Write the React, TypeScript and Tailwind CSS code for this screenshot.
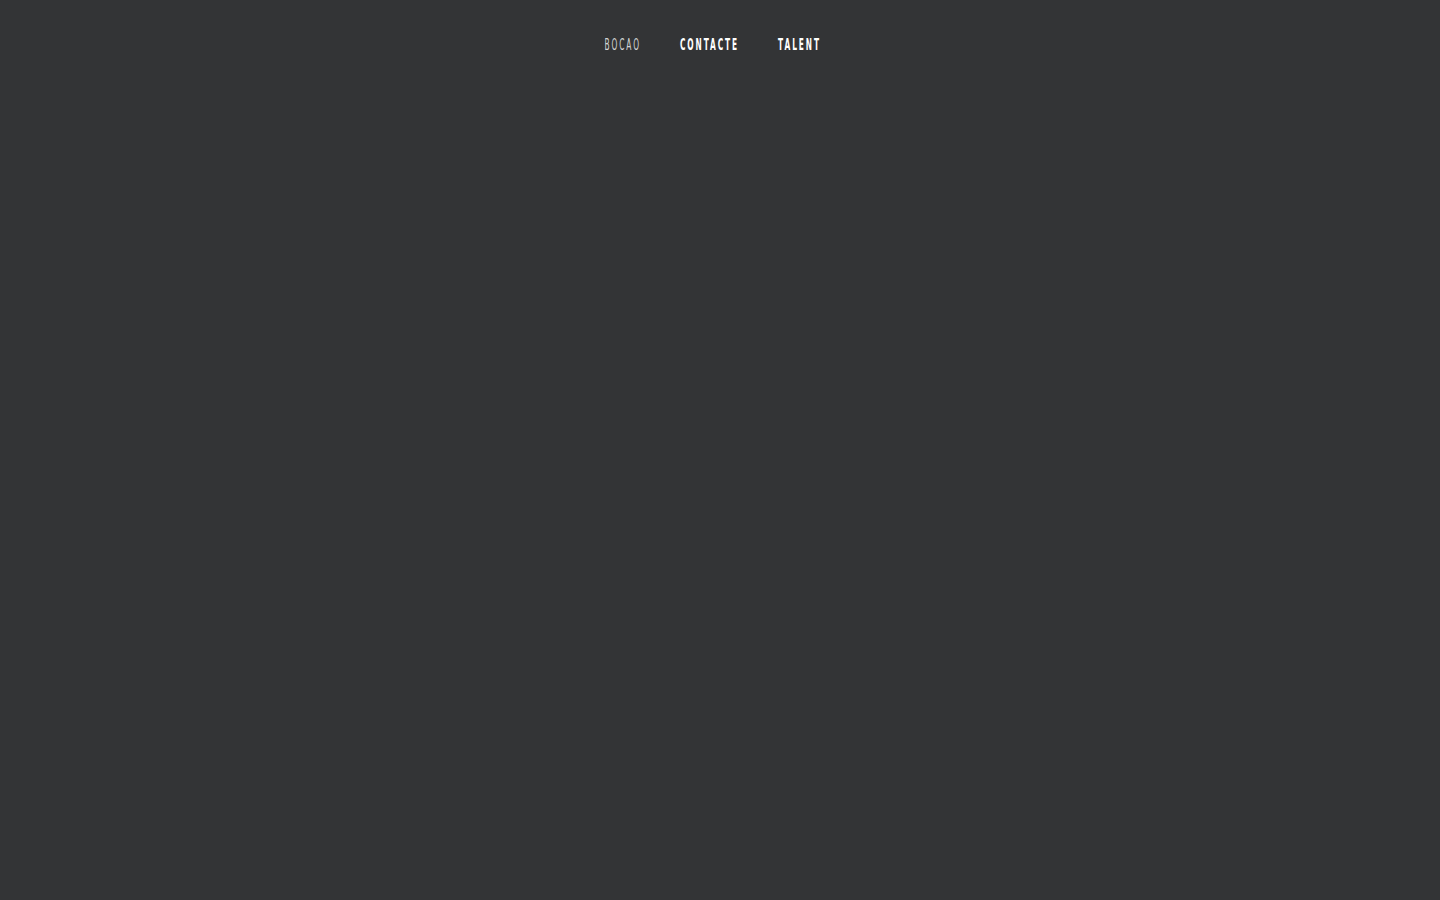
export default function App() {
  const links = [
    { label: 'BOCAO', active: true },
    { label: 'CONTACTE', active: false },
    { label: 'TALENT', active: false },
  ];

  return (
    <div className="min-h-[4600px] bg-[#333436]">
      <nav className="flex justify-center pt-[37px] pr-[15px]">
        {/* condensed display face isn't available, so squeeze the whole menu */}
        <ul
          className="flex items-center gap-[71px]"
          style={{ transform: 'scaleX(0.55)', transformOrigin: 'center' }}
        >
          {links.map((link) => (
            <li key={link.label}>
              <a
                href="#"
                className={`block text-[15px] leading-[16px] tracking-[3.5px] ${
                  link.active ? 'font-light text-[#d4d4d4]' : 'font-bold text-white'
                }`}
                style={{ fontFamily: '"DejaVu Sans Condensed", "Liberation Sans Narrow", sans-serif' }}
              >
                {link.label}
              </a>
            </li>
          ))}
        </ul>
      </nav>
    </div>
  );
}
